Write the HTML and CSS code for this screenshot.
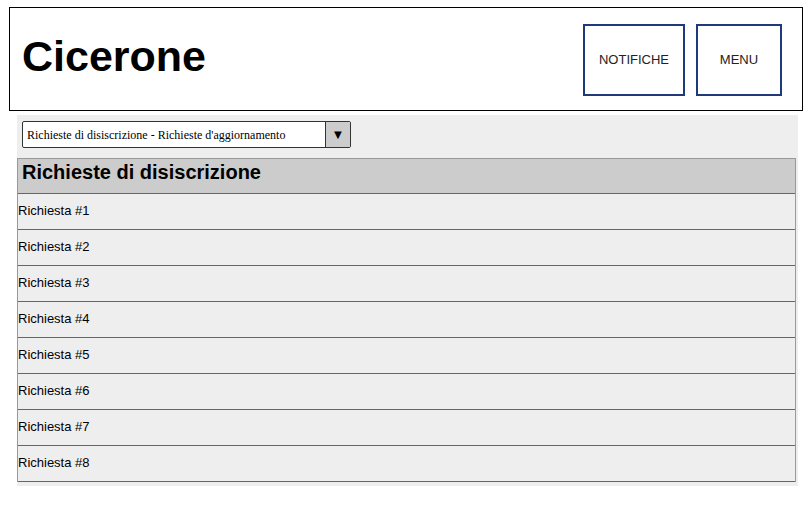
FILE: index.html
```html
<!DOCTYPE html>
<html lang="it">
<head>
<meta charset="utf-8">
<title>Cicerone</title>
<link rel="stylesheet" href="styles.css">
</head>
<body>
<header class="topbar">
  <h1 class="brand">Cicerone</h1>
  <nav class="actions">
    <button class="nav-btn notif">NOTIFICHE</button>
    <button class="nav-btn menu">MENU</button>
  </nav>
</header>
<main class="panel">
  <div class="select">
    <span class="select-text">Richieste di disiscrizione - Richieste d'aggiornamento</span>
    <span class="select-arrow">▼</span>
  </div>
  <div class="list">
    <div class="list-head">Richieste di disiscrizione</div>
    <div class="row">Richiesta #1</div>
    <div class="row">Richiesta #2</div>
    <div class="row">Richiesta #3</div>
    <div class="row">Richiesta #4</div>
    <div class="row">Richiesta #5</div>
    <div class="row">Richiesta #6</div>
    <div class="row">Richiesta #7</div>
    <div class="row">Richiesta #8</div>
  </div>
</main>
</body>
</html>
```
FILE: styles.css
```css
* { box-sizing: border-box; }
body {
  margin: 0;
  background: #fff;
  font-family: "Liberation Sans", Arial, sans-serif;
  color: #000;
}
.topbar {
  margin: 7px 0 0 9px;
  width: 794px;
  height: 104px;
  border: 1px solid #000;
  display: flex;
  align-items: center;
  justify-content: space-between;
  padding: 0 20px 0 12px;
}
.brand {
  margin: 0 0 5px 0;
  font-size: 43px;
  font-weight: bold;
  line-height: 1;
}
.actions {
  display: flex;
  gap: 11px;
  margin-top: 16px;
  margin-bottom: 16px;
  align-self: flex-start;
}
.nav-btn {
  height: 72px;
  background: #fff;
  border: 2px solid #1f3a7a;
  font-family: "Liberation Sans", Arial, sans-serif;
  font-size: 13px;
  color: #222;
  padding: 0 0 2px 0;
}
.notif { width: 102px; }
.menu { width: 86px; }
.panel {
  margin: 4px 0 0 17px;
  width: 781px;
  height: 371px;
  background: #eee;
  padding: 6px 2px 0 0;
}
.select {
  margin-left: 5px;
  width: 329px;
  height: 27px;
  border: 1px solid #333;
  border-radius: 2px;
  background: #fff;
  display: flex;
  align-items: stretch;
}
.select-text {
  flex: 1;
  font-family: "Liberation Serif", "Times New Roman", serif;
  font-size: 12px;
  padding: 1px 0 0 4px;
  display: flex;
  align-items: center;
}
.select-arrow {
  width: 25px;
  background: #ccc;
  border-left: 1px solid #333;
  display: flex;
  align-items: center;
  justify-content: center;
  font-size: 13px;
}
.list {
  margin-top: 10px;
  border-left: 1px solid #999;
  border-right: 1px solid #999;
}
.list-head {
  height: 36px;
  background: #ccc;
  border-top: 1px solid #999;
  border-bottom: 1px solid #666;
  font-weight: bold;
  font-size: 20px;
  padding: 2px 0 0 4px;
}
.row {
  height: 36px;
  border-bottom: 1px solid #666;
  font-size: 13px;
  display: flex;
  align-items: center;
  padding: 0 0 2px 0;
}
```
